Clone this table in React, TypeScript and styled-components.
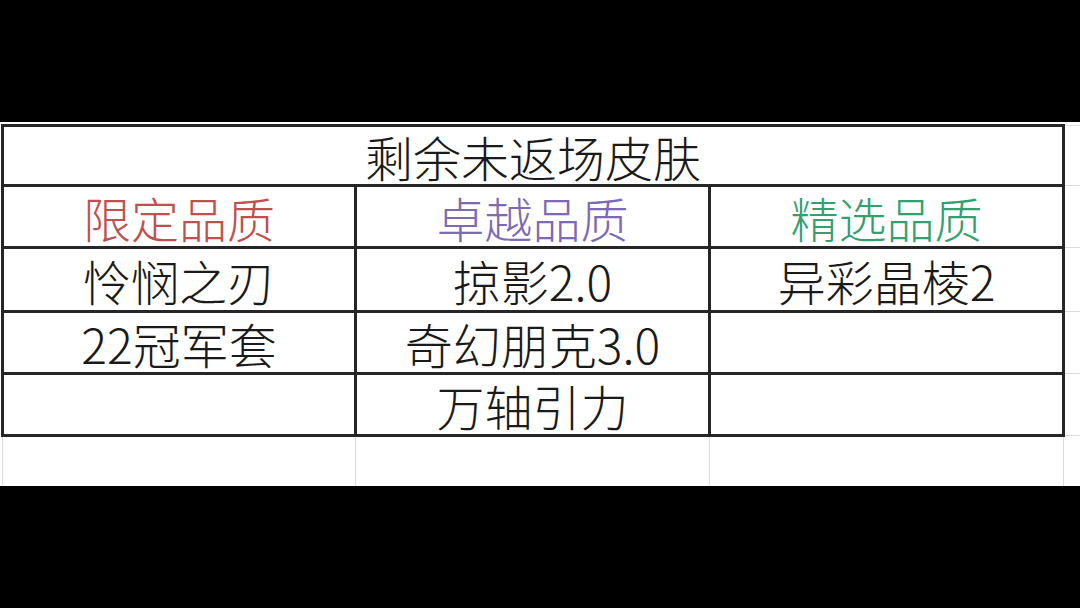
import styled, { createGlobalStyle } from "styled-components";

const GlobalStyle = createGlobalStyle`
  html, body {
    margin: 0;
    padding: 0;
    background: #000;
  }
  body {
    font-family: "Noto Sans CJK SC", "Noto Sans", sans-serif;
  }
`;

const Root = styled.div`
  width: 1080px;
  height: 608px;
  background: #000;
  display: flex;
  flex-direction: column;
  overflow: hidden;
`;

const Band = styled.div<{ $h: number }>`
  height: ${(p) => p.$h}px;
  flex: none;
  background: #000;
`;

const Sheet = styled.div`
  height: 364px;
  flex: none;
  background: #fff;
  overflow: hidden;
  padding: 2px 0 0 1px;
  box-sizing: border-box;
`;

const Grid = styled.table`
  border-collapse: collapse;
  table-layout: fixed;
  width: 1110px;
`;

const Row = styled.tr<{ $h: number }>`
  height: ${(p) => p.$h}px;
`;

const Cell = styled.td<{ $color?: string; $ghost?: boolean }>`
  border: ${(p) => (p.$ghost ? "1px solid #dcdcdc" : "3px solid #262626")};
  padding: 0;
  text-align: center;
  vertical-align: middle;
  font-size: 48px;
  line-height: 1;
  font-weight: 300;
  color: ${(p) => p.$color || "#1a1a1a"};
  white-space: nowrap;
`;

const quality = [
  { name: "限定品质", color: "#c0504d" },
  { name: "卓越品质", color: "#7d69b4" },
  { name: "精选品质", color: "#35a06f" },
];

const skins: string[][] = [
  ["怜悯之刃", "掠影2.0", "异彩晶棱2"],
  ["22冠军套", "奇幻朋克3.0", ""],
  ["", "万轴引力", ""],
];

const App = () => {
  return (
    <Root>
      <GlobalStyle />
      <Band $h={122} />
      <Sheet>
        <Grid>
          <colgroup>
            <col style={{ width: 353 }} />
            <col style={{ width: 354 }} />
            <col style={{ width: 354 }} />
            <col style={{ width: 49 }} />
          </colgroup>
          <tbody>
            <Row $h={60}>
              <Cell colSpan={3}>剩余未返场皮肤</Cell>
              <Cell $ghost />
            </Row>
            <Row $h={62}>
              {quality.map((q) => (
                <Cell key={q.name} $color={q.color}>
                  {q.name}
                </Cell>
              ))}
              <Cell $ghost />
            </Row>
            {skins.map((row, i) => (
              <Row key={i} $h={i === 0 ? 64 : 62}>
                {row.map((name, j) => (
                  <Cell key={j}>{name}</Cell>
                ))}
                <Cell $ghost />
              </Row>
            ))}
            <Row $h={60}>
              <Cell $ghost />
              <Cell $ghost />
              <Cell $ghost />
              <Cell $ghost />
            </Row>
          </tbody>
        </Grid>
      </Sheet>
      <Band $h={122} />
    </Root>
  );
};

export default App;
